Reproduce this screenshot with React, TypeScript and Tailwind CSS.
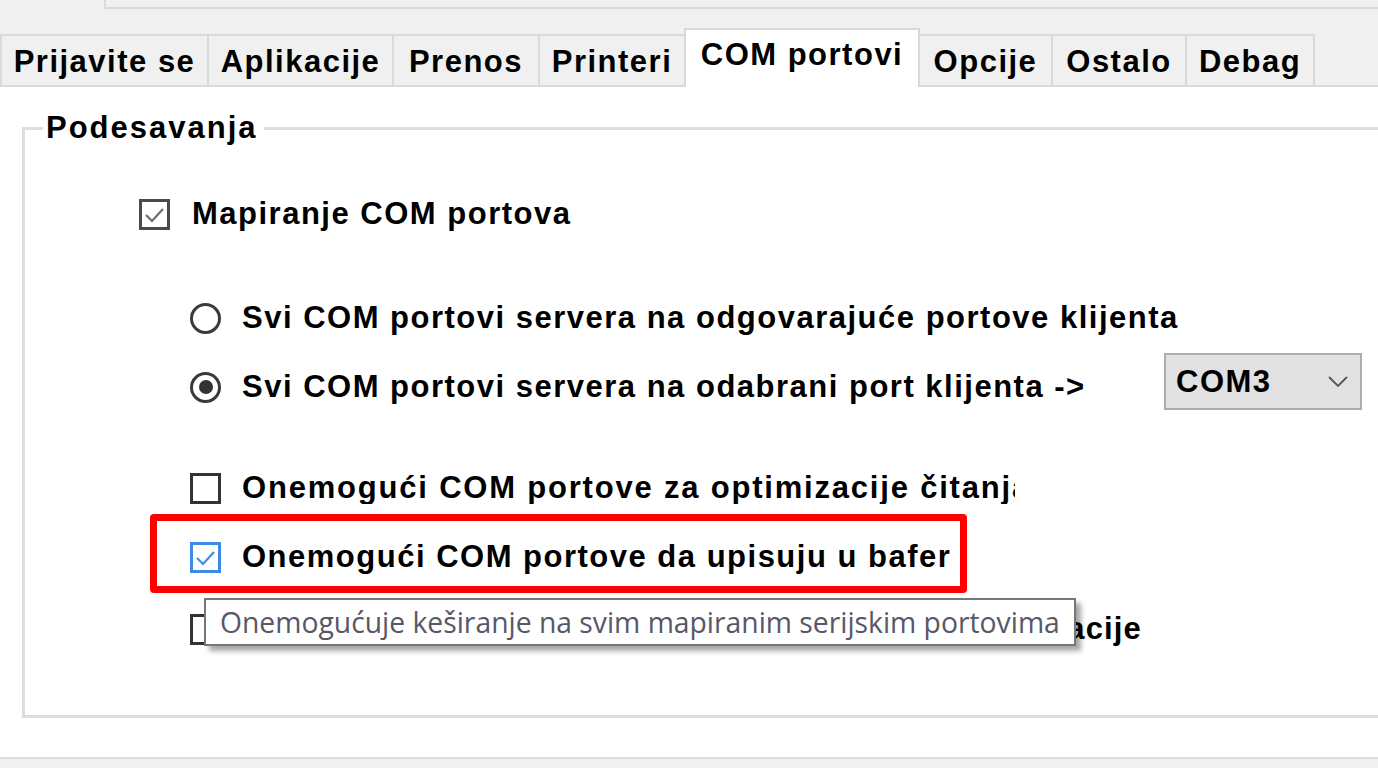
import React from "react";

const BASE =
  "font-['Liberation_Sans',Arial,sans-serif] font-bold text-[31px] leading-[32px] text-black whitespace-nowrap";
const TXT = `${BASE} tracking-[1.5px]`;

function Check({ checked, tone }: { checked: boolean; tone: "gray" | "blue" | "dark" }) {
  const border =
    tone === "blue" ? "border-[#3c8ce6]" : tone === "gray" ? "border-[#4a4a4a]" : "border-[#333333]";
  const stroke = tone === "blue" ? "#3c8ce6" : "#6e6e6e";
  return (
    <div className={`w-[31px] h-[31px] shrink-0 border-[3px] ${border} bg-white flex items-center justify-center`}>
      {checked && (
        <svg width="25" height="25" viewBox="0 0 25 25">
          <path d="M4 13 L10 19 L21 7" fill="none" stroke={stroke} strokeWidth="2.2" />
        </svg>
      )}
    </div>
  );
}

function Radio({ selected }: { selected: boolean }) {
  return (
    <div className="w-[31px] h-[31px] shrink-0 rounded-full border-[3px] border-[#3a3a3a] bg-white flex items-center justify-center">
      {selected && <div className="w-[14px] h-[14px] rounded-full bg-[#333333]" />}
    </div>
  );
}

export default function App() {
  return (
    <div className="relative w-[1378px] h-[768px] overflow-hidden bg-[#f0f0f0] flex flex-col">
      {/* top frame remnant */}
      <div className="ml-[104px] h-[9px] shrink-0 border-l-2 border-b-2 border-[#dadada]" />

      {/* tab strip */}
      <div className="mt-[19px] h-[59px] shrink-0 flex items-end">
        <div className="w-[207px] h-[53px] border-t-2 border-l-2 border-b-2 border-[#d9d9d9] flex items-center justify-center pt-[2px]">
          <span className={TXT}>Prijavite se</span>
        </div>
        <div className="w-[185px] h-[53px] border-t-2 border-l-2 border-b-2 border-[#d9d9d9] flex items-center justify-center pt-[2px]">
          <span className={TXT}>Aplikacije</span>
        </div>
        <div className="w-[146px] h-[53px] border-t-2 border-l-2 border-b-2 border-[#d9d9d9] flex items-center justify-center pt-[2px]">
          <span className={TXT}>Prenos</span>
        </div>
        <div className="w-[146px] h-[53px] border-t-2 border-l-2 border-b-2 border-[#d9d9d9] flex items-center justify-center pt-[2px]">
          <span className={TXT}>Printeri</span>
        </div>
        <div className="w-[236px] h-[59px] border-t-2 border-l-2 border-r-2 border-[#d9d9d9] bg-white flex items-center justify-center pb-[8px]">
          <span className={TXT}>COM portovi</span>
        </div>
        <div className="w-[131px] h-[53px] border-t-2 border-b-2 border-[#d9d9d9] flex items-center justify-center pt-[2px]">
          <span className={TXT}>Opcije</span>
        </div>
        <div className="w-[134px] h-[53px] border-t-2 border-l-2 border-b-2 border-[#d9d9d9] flex items-center justify-center pt-[2px]">
          <span className={TXT}>Ostalo</span>
        </div>
        <div className="w-[130px] h-[53px] border-t-2 border-l-2 border-r-2 border-b-2 border-[#d9d9d9] flex items-center justify-center pt-[2px]">
          <span className={TXT}>Debag</span>
        </div>
        <div className="flex-1 h-[2px] bg-[#d9d9d9]" />
      </div>

      {/* page panel */}
      <div className="flex-1 bg-white overflow-hidden">
        <fieldset className="ml-[22px] mt-[23px] h-[608px] w-[1420px] min-w-0 border-[3px] border-[#dedede]">
          <legend className={`ml-[18px] pl-[3px] pr-[6px] leading-[36px] tracking-[2px] ${BASE}`}>Podesavanja</legend>
          <div className="flex flex-col">
            <div className="mt-[52px] ml-[114px] h-[32px] flex items-center gap-[22px]">
              <Check checked tone="gray" />
              <span className={TXT}>Mapiranje COM portova</span>
            </div>

            <div className="mt-[72px] ml-[165px] h-[32px] flex items-center gap-[21px]">
              <Radio selected={false} />
              <span className={TXT}>Svi COM portovi servera na odgovarajuće portove klijenta</span>
            </div>

            <div className="mt-[37px] ml-[165px] h-[32px] flex items-center gap-[21px]">
              <Radio selected />
              <span className={`${TXT} w-[922px]`}>Svi COM portovi servera na odabrani port klijenta -&gt;</span>
              <div className="-ml-[21px] mb-[11px] w-[198px] h-[57px] shrink-0 bg-[#e1e1e1] border-2 border-[#adadad] flex items-center justify-between pl-[10px] pr-[12px]">
                <span className={TXT}>COM3</span>
                <svg width="20" height="12" viewBox="0 0 20 12">
                  <path d="M1 1 L10 10 L19 1" fill="none" stroke="#555555" strokeWidth="1.8" />
                </svg>
              </div>
            </div>

            <div className="mt-[69px] ml-[165px] h-[32px] flex items-center gap-[21px]">
              <Check checked={false} tone="dark" />
              <span className={`${BASE} tracking-[1.8px] w-[773px] overflow-hidden`}>
                Onemogući COM portove za optimizacije čitanja
              </span>
            </div>

            <div className="mt-[10px] ml-[125px] w-[817px] h-[79px] border-[7px] border-[#ff0000] rounded-[4px] pl-[33px] pt-[20px]">
              <div className="h-[32px] flex items-center gap-[21px]">
                <Check checked tone="blue" />
                <span className={TXT}>Onemogući COM portove da upisuju u bafer</span>
              </div>
            </div>

            <div className="mt-[20px] ml-[165px] h-[32px] flex items-center gap-[21px]">
              <Check checked={false} tone="dark" />
              <span className={`${BASE} tracking-[1.15px]`}>Onemogući COM portove za vreme izvršavanja aplikacije</span>
            </div>
          </div>
        </fieldset>
      </div>

      {/* bottom strip */}
      <div className="h-[11px] shrink-0 border-t-2 border-[#dcdcdc] bg-[#f0f0f0]" />

      {/* tooltip */}
      <div className="absolute left-[204px] top-[598px] w-[872px] h-[48px] bg-white border-2 border-[#767676] shadow-[5px_5px_5px_rgba(0,0,0,0.35)] flex items-center pl-[14px]">
        <span className="font-['Open_Sans','Noto_Sans',sans-serif] text-[28.3px] leading-none text-[#575768] whitespace-nowrap">
          Onemogućuje keširanje na svim mapiranim serijskim portovima
        </span>
      </div>
    </div>
  );
}
